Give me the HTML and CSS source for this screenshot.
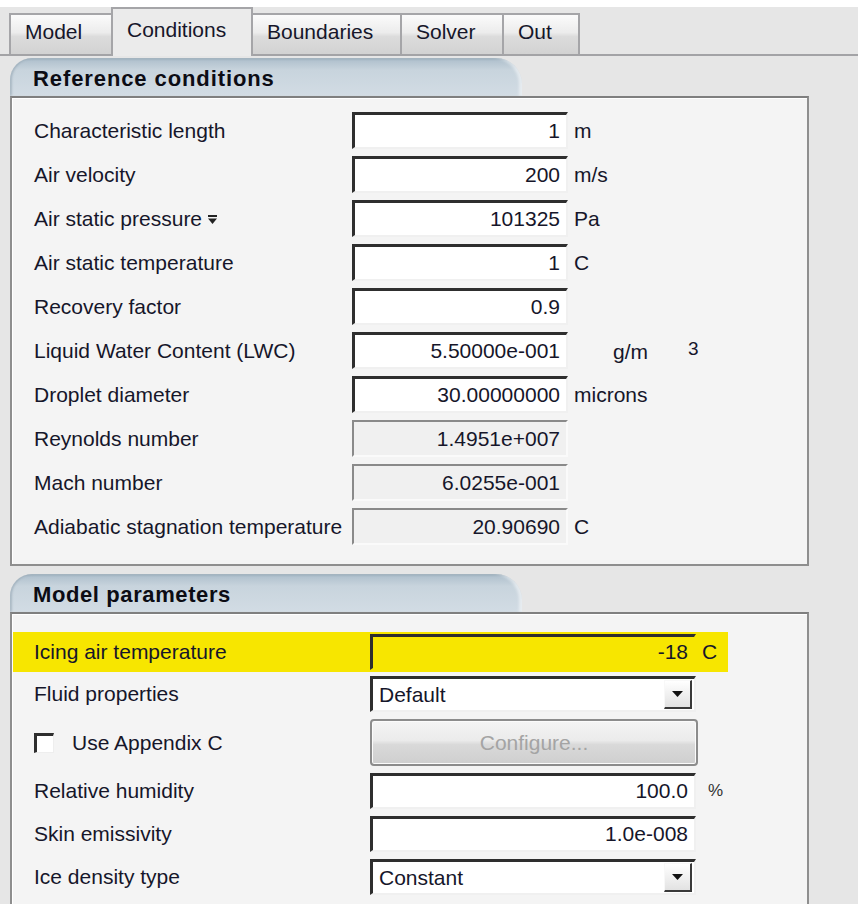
FILE: index.html
```html
<!DOCTYPE html>
<html>
<head>
<meta charset="utf-8">
<link rel="stylesheet" href="styles.css">
</head>
<body>
<div class="window">
  <div class="tabs">
    <div class="tab">Model</div>
    <div class="tab active">Conditions</div>
    <div class="tab">Boundaries</div>
    <div class="tab">Solver</div>
    <div class="tab">Out</div>
  </div>

  <div class="section">
    <div class="section-head">Reference conditions</div>
    <div class="panel panel-ref">
      <div class="row"><span class="label">Characteristic length</span><span class="field">1</span><span class="unit">m</span></div>
      <div class="row"><span class="label">Air velocity</span><span class="field">200</span><span class="unit">m/s</span></div>
      <div class="row"><span class="label">Air static pressure
        <svg class="menu-mark" width="9" height="10" viewBox="0 0 9 10"><rect x="0" y="0" width="9" height="2" fill="#222"/><path d="M0 3.5 H9 L4.5 9 Z" fill="#222"/></svg></span><span class="field">101325</span><span class="unit">Pa</span></div>
      <div class="row"><span class="label">Air static temperature</span><span class="field">1</span><span class="unit">C</span></div>
      <div class="row"><span class="label">Recovery factor</span><span class="field">0.9</span></div>
      <div class="row"><span class="label">Liquid Water Content (LWC)</span><span class="field">5.50000e-001</span><span class="unit unit-far">g/m<sup>3</sup></span></div>
      <div class="row"><span class="label">Droplet diameter</span><span class="field">30.00000000</span><span class="unit">microns</span></div>
      <div class="row"><span class="label">Reynolds number</span><span class="field readonly">1.4951e+007</span></div>
      <div class="row"><span class="label">Mach number</span><span class="field readonly">6.0255e-001</span></div>
      <div class="row"><span class="label">Adiabatic stagnation temperature</span><span class="field readonly">20.90690</span><span class="unit">C</span></div>
    </div>
  </div>

  <div class="section section-model">
    <div class="section-head">Model parameters</div>
    <div class="panel panel-model">
      <div class="row wide highlight"><span class="label">Icing air temperature</span><span class="field">-18</span><span class="unit">C</span></div>
      <div class="row wide"><span class="label">Fluid properties</span>
        <span class="combo"><span class="combo-text">Default</span><span class="combo-btn"><svg width="11" height="6" viewBox="0 0 11 6"><path d="M0 0 H11 L5.5 6 Z" fill="#111"/></svg></span></span></div>
      <div class="row wide row-button"><span class="label"><span class="checkbox"></span>Use Appendix C</span><span class="button">Configure...</span></div>
      <div class="row wide"><span class="label">Relative humidity</span><span class="field">100.0</span><span class="unit unit-small">%</span></div>
      <div class="row wide"><span class="label">Skin emissivity</span><span class="field">1.0e-008</span></div>
      <div class="row wide"><span class="label">Ice density type</span>
        <span class="combo"><span class="combo-text">Constant</span><span class="combo-btn"><svg width="11" height="6" viewBox="0 0 11 6"><path d="M0 0 H11 L5.5 6 Z" fill="#111"/></svg></span></span></div>
    </div>
  </div>
</div>
</body>
</html>
```

FILE: styles.css
```css
html, body {
  margin: 0;
  padding: 0;
  background: #ffffff;
  height: 100%;
  overflow: hidden;
}

body {
  font-family: "Liberation Sans", Arial, sans-serif;
  font-size: 21px;
  color: #16162a;
}

.window {
  margin-top: 7px;
  background: #e6e6e6;
  height: 897px;
}

/* ---------- tab strip ---------- */
.tabs {
  display: flex;
  align-items: flex-end;
  height: 47px;
  padding-left: 9px;
  border-bottom: 2px solid #a3a3a6;
}

.tab {
  height: 41px;
  padding: 0 14px;
  box-sizing: border-box;
  border: 2px solid #a5a5a8;
  border-bottom: none;
  margin-right: -2px;
  background: linear-gradient(#fbfbfb 0%, #ececec 45%, #dcdcdc 55%, #d2d2d2 100%);
  line-height: 34px;
}

.tab:nth-child(1) { width: 104px; }
.tab:nth-child(3) { width: 151px; }
.tab:nth-child(4) { width: 104px; }
.tab:nth-child(5) { width: 78px; }

.tab.active {
  width: 142px;
  height: 49px;
  margin-bottom: -2px;
  background: #ebebeb;
  line-height: 41px;
  position: relative;
  z-index: 1;
}

/* ---------- sections ---------- */
.section {
  margin: 2px 49px 0 10px;
}

.section-model {
  margin-top: 8px;
}

.section-head {
  width: 512px;
  height: 38px;
  box-sizing: border-box;
  padding: 8px 0 0 23px;
  border-radius: 22px 26px 0 0;
  background: linear-gradient(#8fa3b2 0px, #b3c3cf 3px, #c8d4dd 12px, #d2dce4 100%);
  box-shadow: inset -3px 0 3px rgba(255, 255, 255, 0.5), inset 2px 0 2px rgba(120, 140, 155, 0.4);
  font-weight: bold;
  font-size: 22px;
  letter-spacing: 0.9px;
  color: #0c0c14;
}

.section-model .section-head {
  letter-spacing: 0.6px;
}

.panel {
  background: #f4f4f4;
  border: 2px solid #8e8e8e;
  border-top-color: #7f7f7f;
  box-shadow: inset 1px 1px 0 #ffffff;
  display: flex;
  flex-direction: column;
  gap: 7px;
}

.panel-ref {
  height: 470px;
  box-sizing: border-box;
  padding: 14px 0 0 22px;
}

.panel-model {
  height: 320px;
  padding: 18px 0 0 1px;
}

/* ---------- rows ---------- */
.row {
  display: flex;
  align-items: center;
  height: 37px;
}

.label {
  width: 318px;
  flex: none;
  white-space: nowrap;
  display: flex;
  align-items: center;
}

.menu-mark {
  margin-left: 6px;
  margin-top: 2px;
}

.field {
  width: 216px;
  height: 37px;
  box-sizing: border-box;
  flex: none;
  background: #ffffff;
  border-top: 3px solid #2e2e2e;
  border-left: 3px solid #2e2e2e;
  border-right: 2px solid #f0f0f0;
  border-bottom: 2px solid #f0f0f0;
  text-align: right;
  padding-right: 6px;
  line-height: 31px;
}

.field.readonly {
  background: #f0f0f0;
  border-top: 2px solid #8a8a8a;
  border-left: 2px solid #8a8a8a;
  border-right: 2px solid #fafafa;
  border-bottom: 2px solid #fafafa;
  line-height: 33px;
}

.unit {
  margin-left: 6px;
}

.unit-far {
  margin-left: 45px;
}

.unit-far sup {
  font-size: 19px;
  vertical-align: 4px;
  margin-left: 40px;
}

.unit-small {
  font-size: 17px;
  margin-left: 12px;
  color: #333;
}

/* ---------- model parameter rows ---------- */
.row.wide {
  height: 36px;
  padding-left: 21px;
}

.row.wide .label {
  width: 336px;
}

.row.wide .field {
  width: 326px;
  height: 36px;
  line-height: 30px;
}

.row.highlight {
  height: 40px;
  width: 694px;
  background: #f7e600;
  margin-bottom: -3px;
}

.row.highlight .field {
  background: #f7e600;
  border-right-color: #f7e600;
  border-bottom-color: #f7e600;
}

.combo {
  width: 326px;
  height: 36px;
  box-sizing: border-box;
  flex: none;
  display: flex;
  align-items: center;
  justify-content: space-between;
  background: #ffffff;
  border-top: 3px solid #2e2e2e;
  border-left: 3px solid #2e2e2e;
  border-right: 2px solid #f0f0f0;
  border-bottom: 2px solid #f0f0f0;
  padding: 0 2px 0 6px;
}

.combo-btn {
  width: 28px;
  height: 29px;
  box-sizing: border-box;
  display: flex;
  align-items: center;
  justify-content: center;
  background: linear-gradient(#ffffff, #e2e2e2);
  border-top: 1px solid #f8f8f8;
  border-left: 1px solid #f8f8f8;
  border-right: 2px solid #3a3a3a;
  border-bottom: 2px solid #3a3a3a;
}

.row.row-button {
  height: 47px;
}

.checkbox {
  width: 20px;
  height: 20px;
  box-sizing: border-box;
  background: #ffffff;
  border-top: 3px solid #2e2e2e;
  border-left: 3px solid #2e2e2e;
  border-right: 1px solid #eeeeee;
  border-bottom: 1px solid #eeeeee;
  margin-right: 18px;
}

.button {
  width: 328px;
  height: 47px;
  box-sizing: border-box;
  flex: none;
  border: 2px solid #8c8c8c;
  border-radius: 4px;
  background: linear-gradient(#f4f4f4 0%, #ebebeb 45%, #d9d9d9 55%, #cfcfcf 100%);
  box-shadow: inset 0 0 0 1px #fbfbfb;
  color: #a4a4a4;
  text-align: center;
  line-height: 43px;
}
```
